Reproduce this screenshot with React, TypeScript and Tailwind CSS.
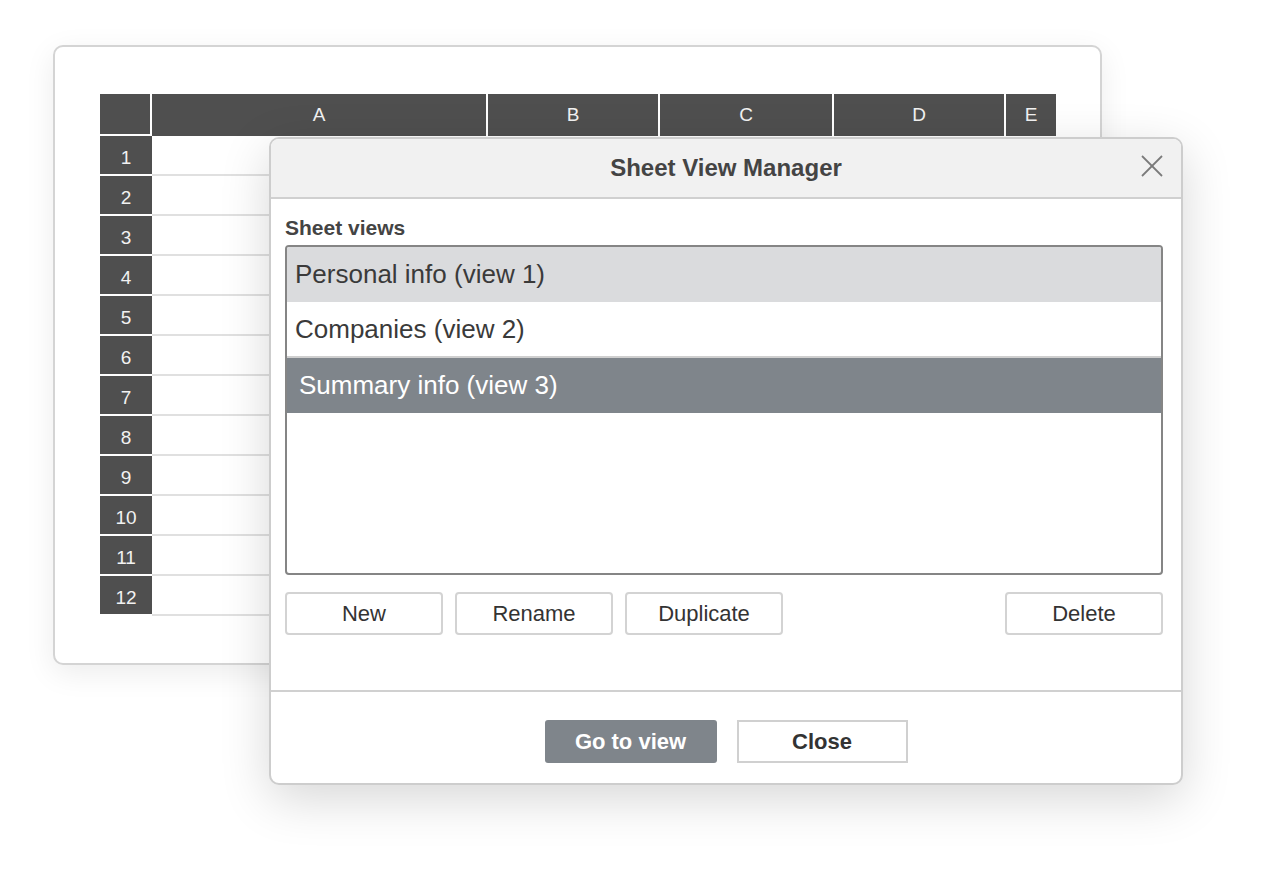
// sheet view manager over a spreadsheet card
const columns = [
    { label: 'A', w: 'w-[336px] border-r-2' },
    { label: 'B', w: 'w-[172px] border-r-2' },
    { label: 'C', w: 'w-[174px] border-r-2' },
    { label: 'D', w: 'w-[172px] border-r-2' },
    { label: 'E', w: 'w-[50px]' },
]

const rows = Array.from({ length: 12 }, (_, i) => i + 1)

const SheetCard = () => {
    return (
        <div className="h-[620px] w-[1049px] rounded-[10px] border-2 border-[#d4d4d4] bg-white pl-[45px] pt-[47px] shadow-[0_8px_30px_rgba(0,0,0,0.08)]">
            <div className="flex flex-col">
                {/* header row */}
                <div className="flex h-[42px]">
                    <div className="w-[52px] border-r-2 border-b-2 border-white bg-[#4f4f4f]"></div>
                    {columns.map((c) => (
                        <div
                            key={c.label}
                            className={`${c.w} flex items-center justify-center border-white bg-[#4f4f4f] text-[19px] text-[#f2f2f2]`}
                        >
                            {c.label}
                        </div>
                    ))}
                </div>
                {rows.map((r) => (
                    <div key={r} className="flex h-[40px]">
                        <div className="flex w-[52px] items-center justify-center border-b-2 border-white bg-[#4f4f4f] pt-[6px] text-[19px] text-[#f2f2f2]">
                            {r}
                        </div>
                        <div className="w-[904px] border-b-2 border-[#e0e0e0]"></div>
                    </div>
                ))}
            </div>
        </div>
    )
}

const Button = ({ children }: { children: React.ReactNode }) => (
    <button className="h-[43px] w-[158px] rounded-[4px] border-2 border-[#d3d3d3] bg-white text-[22px] text-[#333]">
        {children}
    </button>
)

const ViewManager = () => {
    return (
        <div className="absolute left-[269px] top-[137px] flex h-[648px] w-[914px] flex-col overflow-hidden rounded-[10px] border-2 border-[#cdcdcd] bg-white shadow-[0_14px_50px_rgba(0,0,0,0.16)]">
            {/* title bar */}
            <div className="relative flex h-[60px] shrink-0 items-center justify-center border-b-2 border-[#d0d0d0] bg-[#f1f1f1]">
                <span className="text-[24px] font-bold text-[#444]">Sheet View Manager</span>
                <svg
                    className="absolute right-[18px] top-[16px]"
                    width="22"
                    height="22"
                    viewBox="0 0 22 22"
                    fill="none"
                    stroke="#7a7a7a"
                    strokeWidth="1.8"
                >
                    <line x1="1" y1="1" x2="21" y2="21" />
                    <line x1="21" y1="1" x2="1" y2="21" />
                </svg>
            </div>

            {/* body */}
            <div className="flex flex-1 flex-col pl-[14px] pt-[17px]">
                <div className="text-[21px] font-bold leading-[24px] text-[#444]">Sheet views</div>
                <div className="mt-[5px] h-[330px] w-[878px] overflow-hidden rounded-[4px] border-2 border-[#858585]">
                    <div className="flex h-[55px] items-center bg-[#dadbdd] pl-[8px] text-[26px] text-[#3a3a3a]">
                        Personal info (view 1)
                    </div>
                    <div className="flex h-[56px] items-center border-b-2 border-[#cfcfcf] bg-white pl-[8px] text-[26px] text-[#3a3a3a]">
                        Companies (view 2)
                    </div>
                    <div className="flex h-[55px] items-center bg-[#7f858b] pl-[12px] text-[26px] text-white">
                        Summary info (view 3)
                    </div>
                </div>
                <div className="mt-[17px] flex w-[878px] gap-[12px]">
                    <Button>New</Button>
                    <Button>Rename</Button>
                    <Button>Duplicate</Button>
                    <div className="ml-auto">
                        <Button>Delete</Button>
                    </div>
                </div>
            </div>

            {/* footer */}
            <div className="flex h-[93px] shrink-0 justify-center gap-[20px] border-t-2 border-[#d0d0d0] pt-[28px]">
                <button className="h-[43px] w-[172px] rounded-[3px] bg-[#7f858b] text-[22px] font-bold text-white">
                    Go to view
                </button>
                <button className="h-[43px] w-[171px] border-2 border-[#d0d0d0] bg-white text-[22px] font-bold text-[#333]">
                    Close
                </button>
            </div>
        </div>
    )
}

export default function App() {
    return (
        <div className="relative h-[880px] w-[1280px] overflow-hidden bg-white pl-[53px] pt-[45px] font-['Liberation_Sans',Arial,sans-serif]">
            <SheetCard />
            <ViewManager />
        </div>
    )
}
